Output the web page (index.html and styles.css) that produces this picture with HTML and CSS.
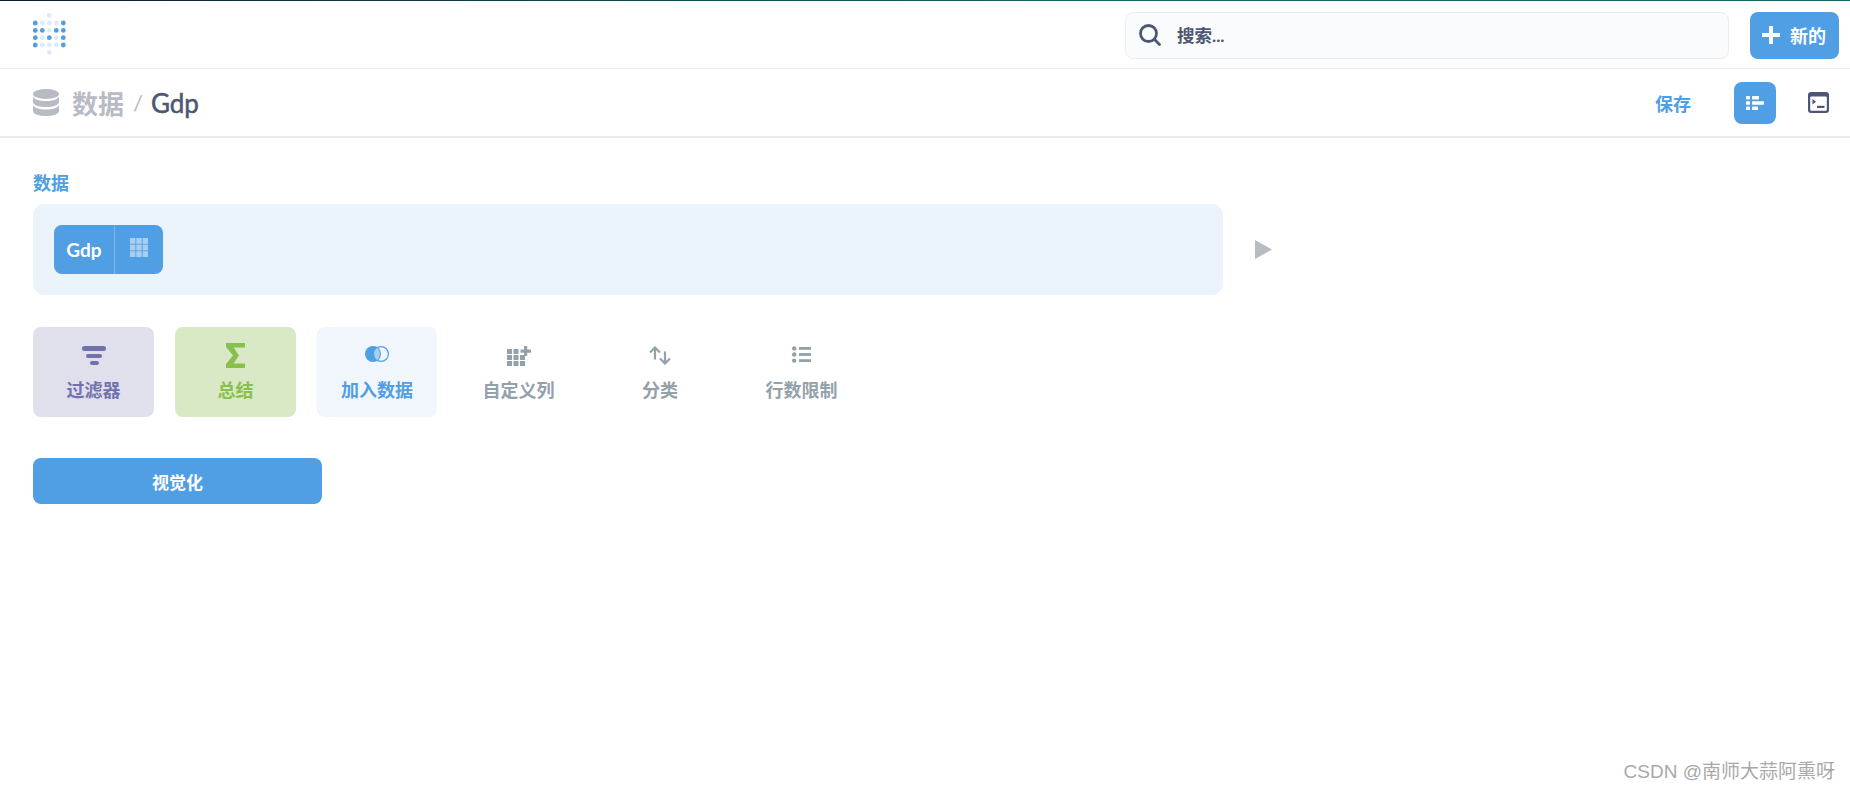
FILE: index.html
```html
<!DOCTYPE html>
<html lang="zh">
<head>
    <meta charset="UTF-8">
    <title>数据 / Gdp</title>
    <link rel="stylesheet" href="styles.css">
</head>
<body>

    <header class="topbar">
        <svg class="logo" width="34" height="42" viewBox="0 0 34 42">
            <g fill="#dcebfa">
                <circle cx="16.3" cy="2.5" r="2.4"/>
                <circle cx="9.3" cy="10" r="2.4"/><circle cx="16.3" cy="10" r="2.4"/><circle cx="23.3" cy="10" r="2.4"/>
                <circle cx="16.3" cy="17.4" r="2.4"/>
                <circle cx="9.3" cy="24.7" r="2.4"/><circle cx="23.3" cy="24.7" r="2.4"/>
                <circle cx="9.3" cy="32" r="2.4"/><circle cx="16.3" cy="32" r="2.4"/><circle cx="23.3" cy="32" r="2.4"/>
                <circle cx="16.3" cy="39.4" r="2.4"/>
            </g>
            <g fill="#509ee3">
                <circle cx="2.3" cy="10" r="2.4"/><circle cx="30.3" cy="10" r="2.4"/>
                <circle cx="2.3" cy="17.4" r="2.4"/><circle cx="9.3" cy="17.4" r="2.4"/><circle cx="23.3" cy="17.4" r="2.4"/><circle cx="30.3" cy="17.4" r="2.4"/>
                <circle cx="2.3" cy="24.7" r="2.4"/><circle cx="16.3" cy="24.7" r="2.4"/><circle cx="30.3" cy="24.7" r="2.4"/>
                <circle cx="2.3" cy="32" r="2.4"/><circle cx="30.3" cy="32" r="2.4"/>
            </g>
        </svg>
        <div class="search">
            <svg width="22" height="22" viewBox="0 0 22 22" fill="none" stroke="#4c5773" stroke-width="2.8">
                <circle cx="9.5" cy="9.5" r="8"/>
                <path d="M15.5 15.5l5 5" stroke-linecap="round"/>
            </svg>
            <span>搜索...</span>
        </div>
        <button class="new-btn">
            <svg width="18" height="18" viewBox="0 0 18 18" fill="#fff"><path d="M7 0h4v7h7v4h-7v7H7v-7H0V7h7z"/></svg>
            <span>新的</span>
        </button>
    </header>

    <div class="subbar">
        <svg class="db-icon" width="26" height="27" viewBox="0 0 26 27" fill="#b8bbc3">
            <ellipse cx="13" cy="5" rx="13" ry="5"/>
            <path d="M0 7.5C2 11 7 12 13 12s11-1 13-4.5V13c0 3-6 5-13 5S0 16 0 13z"/>
            <path d="M0 16c2 3.5 7 4.5 13 4.5S24 19.500 26 16v6c0 3-6 5-13 5S0 25 0 22z"/>
        </svg>
        <span class="crumb-root">数据</span>
        <span class="crumb-sep">/</span>
        <span class="crumb-name">Gdp</span>
        <span class="save">保存</span>
        <div class="list-btn">
            <svg width="18" height="14" viewBox="0 0 18 14" fill="#fff">
                <rect x="0" y="0" width="4" height="3.400" rx=".6"/><rect x="6" y="0" width="7" height="3.400" rx=".6"/>
                <rect x="0" y="5.300" width="4" height="3.400" rx=".6"/><rect x="6" y="5.300" width="12" height="3.400" rx=".6"/>
                <rect x="0" y="10.600" width="4" height="3.400" rx=".6"/><rect x="6" y="10.600" width="6" height="3.400" rx=".6"/>
            </svg>
        </div>
        <svg class="term-icon" width="21" height="21" viewBox="0 0 21 21">
            <rect x="0" y="0" width="21" height="21" rx="3" fill="#4c5773"/>
            <rect x="2.200" y="4.500" width="16.600" height="14.300" rx="1" fill="#fff"/>
            <path d="M4.500 7l3.500 2.700-3.500 2.700z" fill="#4c5773"/>
            <rect x="9" y="13.800" width="7.500" height="2.200" fill="#4c5773"/>
        </svg>
    </div>

    <main class="content">
        <div class="section-label">数据</div>
        <div class="data-row">
            <div class="data-panel">
                <div class="table-pill">
                    <span class="pill-name">Gdp</span>
                    <span class="pill-icon">
                        <svg width="18" height="19" viewBox="0 0 18 19" fill="#fff" fill-opacity=".5">
                            <rect x="0" y="0" width="5.400" height="5.800"/><rect x="6.300" y="0" width="5.400" height="5.800"/><rect x="12.600" y="0" width="5.400" height="5.800"/>
                            <rect x="0" y="6.600" width="5.400" height="5.800"/><rect x="6.300" y="6.600" width="5.400" height="5.800"/><rect x="12.600" y="6.600" width="5.400" height="5.800"/>
                            <rect x="0" y="13.200" width="5.400" height="5.800"/><rect x="6.300" y="13.200" width="5.400" height="5.800"/><rect x="12.600" y="13.200" width="5.400" height="5.800"/>
                        </svg>
                    </span>
                </div>
            </div>
            <svg class="play" width="17" height="19" viewBox="0 0 17 19" fill="#b8bbc3"><path d="M0 0l17 9.500L0 19z"/></svg>
        </div>

        <div class="actions">
            <div class="action action-filter">
                <svg width="24" height="20" viewBox="0 0 24 20" fill="#7172ad">
                    <rect x="0" y="0" width="24" height="5" rx="2.500"/>
                    <rect x="4" y="8" width="16" height="4" rx="2"/>
                    <rect x="8" y="15" width="9" height="4" rx="2"/>
                </svg>
                <span>过滤器</span>
            </div>
            <div class="action action-sum">
                <svg width="19" height="25" viewBox="0 0 19 25" fill="#88bf4d"><path d="M0 0h19v4.500H7.500L13 12.500 7.500 20.500H19V25H0v-4l7-8.500L0 4z"/></svg>
                <span>总结</span>
            </div>
            <div class="action action-join narrow">
                <svg width="24" height="16" viewBox="0 0 24 16">
                    <circle cx="8" cy="8" r="8" fill="#509ee3"/>
                    <circle cx="16" cy="8" r="7.400" fill="none" stroke="#509ee3" stroke-width="1.200"/>
                    <path d="M12 1.800a8 8 0 0 1 0 12.400a8 8 0 0 1 0-12.400z" fill="#a9cff1"/>
                </svg>
                <span>加入数据</span>
            </div>
            <div class="action">
                <svg width="24" height="20" viewBox="0 0 24 20" fill="#93a1ab">
                    <rect x="0" y="3" width="5" height="5"/><rect x="6.500" y="3" width="5" height="5"/>
                    <rect x="0" y="9" width="5" height="5"/><rect x="6.500" y="9" width="5" height="5"/><rect x="13" y="9" width="5" height="5"/>
                    <rect x="0" y="15" width="5" height="5"/><rect x="6.500" y="15" width="5" height="5"/><rect x="13" y="15" width="5" height="5"/>
                    <path d="M17 0h3.200v3.500H24v3.200h-3.800v3.300H17V6.700h-3.500V3.500H17z"/>
                </svg>
                <span>自定义列</span>
            </div>
            <div class="action narrow">
                <svg width="22" height="19" viewBox="0 0 22 19" fill="none" stroke="#93a1ab" stroke-width="2.200">
                    <path d="M6 13.500V1.500M1 6.500l5-5 5 5"/>
                    <path d="M16 5.500v12M11 12.500l5 5 5-5"/>
                </svg>
                <span>分类</span>
            </div>
            <div class="action">
                <svg width="19" height="17" viewBox="0 0 19 17" fill="#93a1ab">
                    <circle cx="2.200" cy="2.400" r="2.200"/><circle cx="2.200" cy="8.500" r="2.200"/><circle cx="2.200" cy="14.600" r="2.200"/>
                    <rect x="7" y="1" width="12" height="2.800"/><rect x="7" y="7.100" width="12" height="2.800"/><rect x="7" y="13.200" width="12" height="2.800"/>
                </svg>
                <span>行数限制</span>
            </div>
        </div>

        <button class="visualize">视觉化</button>
    </main>

    <div class="watermark">CSDN @南师大蒜阿熏呀</div>

</body>
</html>
```

FILE: styles.css
```css
* {
    box-sizing: border-box;
}
html, body {
    height: 100%;
}
body {
    margin: 0;
    font-family: Lato, "Noto Sans CJK SC", sans-serif;
    background-color: #fff;
    color: #4c5773;
    overflow: hidden;
}
button {
    border: none;
    font-family: inherit;
    cursor: pointer;
}
.topbar {
    display: flex;
    align-items: center;
    height: 69px;
    padding: 0 11px 0 33px;
    border-style: solid;
    border-width: 1px 0 0 0;
    border-image: linear-gradient(90deg, #0d1b33, #17695f 60%, #17695f) 1;
    box-shadow: inset 0 -1px 0 #ebebed;
}
.logo {
    margin-right: auto;
    margin-top: -3px;
}
.search {
    display: flex;
    align-items: center;
    width: 604px;
    height: 47px;
    padding-left: 13px;
    margin-right: 21px;
    background-color: #f9fbfc;
    border: 1px solid #ebeef0;
    border-radius: 8px;
    font-size: 17.500px;
    font-weight: 700;
}
.search span {
    margin-left: 16px;
    margin-bottom: 1px;
}
.new-btn {
    display: flex;
    align-items: center;
    gap: 10px;
    width: 89px;
    height: 47px;
    padding-left: 12px;
    background-color: #509ee3;
    border-radius: 8px;
    color: #fff;
    font-size: 18px;
    font-weight: 700;
}
.subbar {
    display: flex;
    align-items: center;
    height: 69px;
    padding: 0 21px 0 33px;
    border-bottom: 2px solid #ebebed;
}
.db-icon {
    margin-right: 13px;
}
.crumb-root {
    font-size: 26px;
    font-weight: 700;
    color: #b8bbc3;
}
.crumb-sep {
    margin: 0 8px 0 9px;
    font-size: 22px;
    color: #b8bbc3;
}
.crumb-name {
    font-size: 26px;
    -webkit-text-stroke: 0.5px #4c5773;
}
.save {
    margin-left: auto;
    margin-right: 43px;
    font-size: 18px;
    font-weight: 700;
    color: #509ee3;
}
.list-btn {
    display: flex;
    align-items: center;
    justify-content: center;
    width: 42px;
    height: 42px;
    margin-right: 32px;
    background-color: #509ee3;
    border-radius: 8px;
}
.content {
    padding: 0 33px;
}
.section-label {
    height: 24px;
    margin-top: 33px;
    line-height: 24px;
    font-size: 18px;
    font-weight: 700;
    color: #509ee3;
}
.data-row {
    display: flex;
    align-items: center;
    margin-top: 9px;
}
.data-panel {
    display: flex;
    align-items: center;
    width: 1190px;
    height: 91px;
    padding-left: 21px;
    background-color: #ebf3fb;
    border-radius: 11px;
}
.play {
    margin-left: 32px;
}
.table-pill {
    display: flex;
    align-items: stretch;
    width: 109px;
    height: 49px;
    background-color: #509ee3;
    border-radius: 8px;
    color: #fff;
    font-weight: 700;
    font-size: 19px;
}
.pill-name {
    display: flex;
    align-items: center;
    justify-content: center;
    width: 61px;
    border-right: 1px solid #7db6ea;
}
.pill-icon {
    display: flex;
    align-items: center;
    justify-content: center;
    flex: 1;
    padding-bottom: 4px;
}
.actions {
    display: flex;
    gap: 21px;
    margin-top: 32px;
}
.action {
    display: flex;
    flex-direction: column;
    align-items: center;
    justify-content: space-between;
    width: 121px;
    height: 90px;
    padding: 19px 0 15px;
    border-radius: 8px;
    font-size: 18px;
    font-weight: 700;
    color: #93a1ab;
}
.action svg {
    flex: none;
}
.narrow {
    width: 120px;
}
.action-filter {
    background-color: #e0dfec;
    color: #7172ad;
}
.action-sum {
    padding-top: 16px;
    background-color: #d9e9c5;
    color: #88bf4d;
}
.action-join {
    background-color: #f1f6fd;
    color: #509ee3;
}
.visualize {
    display: block;
    width: 289px;
    height: 46px;
    margin-top: 41px;
    background-color: #509ee3;
    border-radius: 8px;
    color: #fff;
    font-size: 17px;
    font-weight: 700;
}
.watermark {
    position: absolute;
    right: 15px;
    bottom: 7px;
    font-family: "Liberation Sans", "Noto Sans CJK SC", sans-serif;
    font-size: 19px;
    color: #a9a9a9;
}
```
